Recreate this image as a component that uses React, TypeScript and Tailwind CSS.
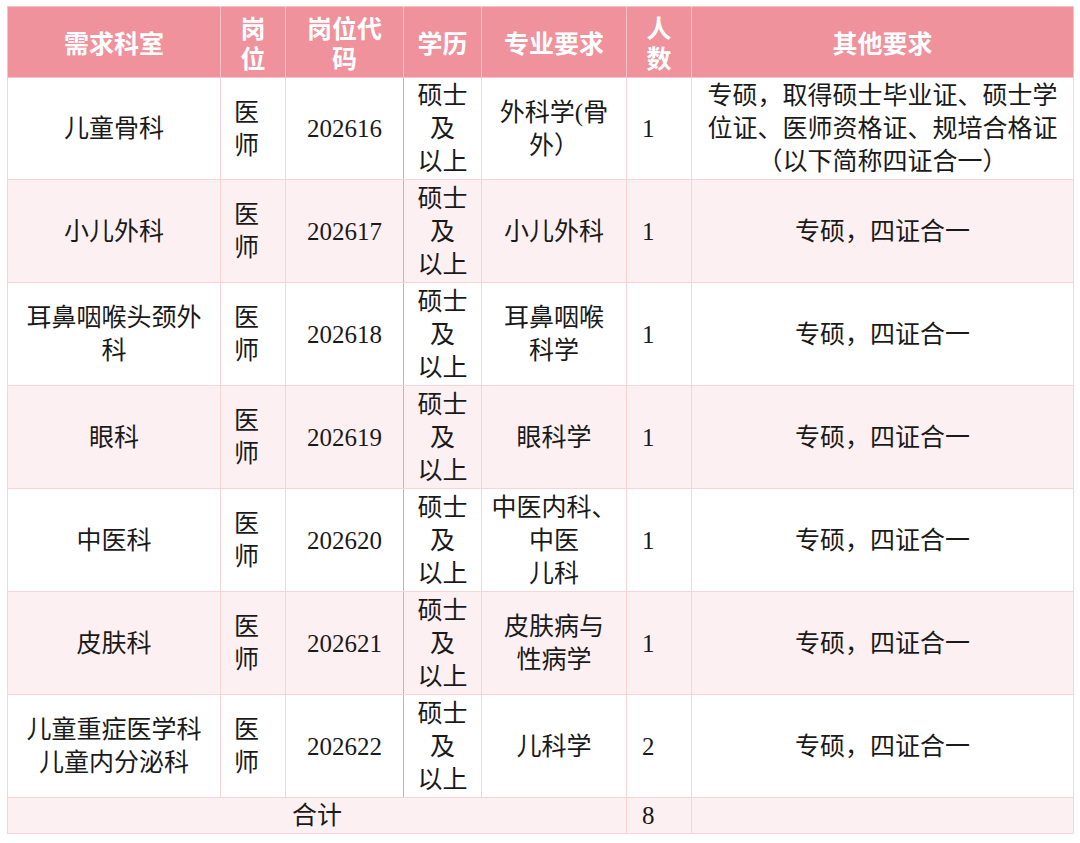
import React from "react";

const rows = [
  { dept: ["儿童骨科"], code: "202616", major: ["外科学(骨", "外）"], num: "1", other: ["专硕，取得硕士毕业证、硕士学", "位证、医师资格证、规培合格证", "（以下简称四证合一）"] },
  { dept: ["小儿外科"], code: "202617", major: ["小儿外科"], num: "1", other: ["专硕，四证合一"] },
  { dept: ["耳鼻咽喉头颈外", "科"], code: "202618", major: ["耳鼻咽喉", "科学"], num: "1", other: ["专硕，四证合一"] },
  { dept: ["眼科"], code: "202619", major: ["眼科学"], num: "1", other: ["专硕，四证合一"] },
  { dept: ["中医科"], code: "202620", major: ["中医内科、", "中医", "儿科"], num: "1", other: ["专硕，四证合一"] },
  { dept: ["皮肤科"], code: "202621", major: ["皮肤病与", "性病学"], num: "1", other: ["专硕，四证合一"] },
  { dept: ["儿童重症医学科", "儿童内分泌科"], code: "202622", major: ["儿科学"], num: "2", other: ["专硕，四证合一"] },
];

function Lines({ items }: { items: string[] }) {
  return (
    <>
      {items.map((t, i) => (
        <div key={i}>{t}</div>
      ))}
    </>
  );
}

export default function App() {
  const th = "border border-[#f6c3c9] text-white font-bold text-[25px] leading-[30px] text-center align-middle";
  const td = "border border-[#f9d3d8] text-[25px] leading-[33px] text-center align-middle text-[#1a1a1a]";
  return (
    <div className="w-[1080px] h-[843px] bg-white pt-[6px] pl-[7px]" style={{ fontFamily: '"Liberation Serif", "Noto Sans CJK SC", serif' }}>
      <table className="table-fixed border-collapse w-[1066px] border border-[#ef9aa4]">
        <colgroup>
          <col className="w-[213px]" />
          <col className="w-[65px]" />
          <col className="w-[118px]" />
          <col className="w-[78px]" />
          <col className="w-[145px]" />
          <col className="w-[65px]" />
          <col className="w-[382px]" />
        </colgroup>
        <thead>
          <tr className="h-[71px] bg-[#ef929c]" style={{ fontFamily: '"Noto Sans CJK SC", sans-serif' }}>
            <th className={th}>需求科室</th>
            <th className={th}>岗<br />位</th>
            <th className={th}>岗位代<br />码</th>
            <th className={th}>学历</th>
            <th className={th}>专业要求</th>
            <th className={th}>人<br />数</th>
            <th className={th}>其他要求</th>
          </tr>
        </thead>
        <tbody>
          {rows.map((r, i) => (
            <tr key={r.code} className={(i === 0 ? "h-[102px] " : "h-[103px] ") + (i % 2 === 1 ? "bg-[#fdf0f2]" : "bg-white")}>
              <td className={td}><Lines items={r.dept} /></td>
              <td className={td + " !text-left pl-[13px]"}>医<br />师</td>
              <td className={td + " border-r-[#f0a0aa]"}>{r.code}</td>
              <td className={td}>硕士<br />及<br />以上</td>
              <td className={td}><Lines items={r.major} /></td>
              <td className={td + " !text-left pl-[15px]"}>{r.num}</td>
              <td className={td + " leading-[32px]"}><Lines items={r.other} /></td>
            </tr>
          ))}
          <tr className="h-[36px] bg-[#fdf0f2]">
            <td colSpan={5} className={td + " leading-[30px]"}>合计</td>
            <td className={td + " !text-left pl-[15px] leading-[30px]"}>8</td>
            <td className={td}></td>
          </tr>
        </tbody>
      </table>
    </div>
  );
}
